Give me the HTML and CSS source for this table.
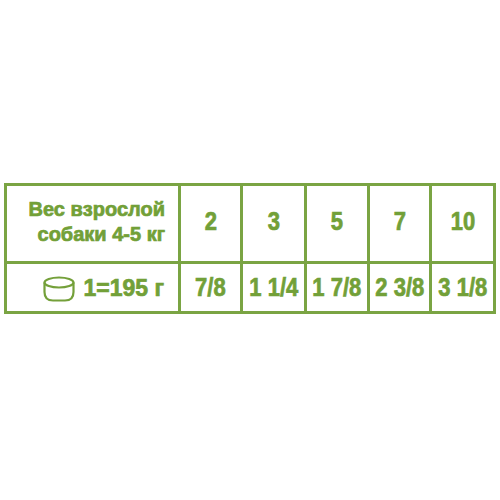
FILE: index.html
```html
<!DOCTYPE html>
<html lang="ru">
<head>
<meta charset="utf-8">
<link rel="stylesheet" href="styles.css">
</head>
<body>
<div class="table">
  <div class="cell label head"><span>Вес взрослой<br>собаки 4-5 кг</span></div>
  <div class="cell num head"><span>2</span></div>
  <div class="cell num head"><span>3</span></div>
  <div class="cell num head"><span>5</span></div>
  <div class="cell num head"><span>7</span></div>
  <div class="cell num head"><span>10</span></div>
  <div class="cell label portion">
    <svg class="can" width="32" height="26" viewBox="0 0 32 26" aria-hidden="true">
      <ellipse cx="16" cy="6.5" rx="14.5" ry="5" fill="none" stroke="#74a03a" stroke-width="2.2"/>
      <path d="M1.5 6.5 V16 Q1.5 24.5 10 24.5 H22 Q30.5 24.5 30.5 16 V6.5" fill="none" stroke="#74a03a" stroke-width="2.2"/>
    </svg>
    <span class="dose">1=195 г</span>
  </div>
  <div class="cell num"><span>7/8</span></div>
  <div class="cell num"><span>1 1/4</span></div>
  <div class="cell num"><span>1 7/8</span></div>
  <div class="cell num"><span>2 3/8</span></div>
  <div class="cell num"><span>3 1/8</span></div>
</div>
</body>
</html>
```
FILE: styles.css
```css
html, body {
  margin: 0;
  padding: 0;
  background: #ffffff;
}
body {
  font-family: "Liberation Sans", Arial, sans-serif;
  color: #72a038;
}
.table {
  margin: 183px 0 0 4px;
  width: 492px;
  box-sizing: border-box;
  display: grid;
  grid-template-columns: 171px 59px 61px 60px 59px 61px;
  grid-template-rows: 75px 47px;
  gap: 3px;
  padding: 3px;
  background: #7aa443;
}
.cell {
  background: #ffffff;
  display: flex;
  align-items: center;
  font-weight: 700;
  -webkit-text-stroke: 0.7px #72a038;
}
.head {
  padding-bottom: 4px;
}
.label {
  justify-content: flex-end;
  padding-right: 13px;
  font-size: 20px;
  line-height: 25px;
  text-align: right;
}
.num {
  justify-content: center;
  font-size: 25px;
}
.num span {
  display: inline-block;
  transform: scaleX(0.88);
  white-space: nowrap;
}
.portion {
  gap: 8px;
  font-size: 23px;
  padding-top: 2px;
  padding-right: 14px;
}
.can {
  display: block;
}
.dose {
  white-space: nowrap;
}
```
